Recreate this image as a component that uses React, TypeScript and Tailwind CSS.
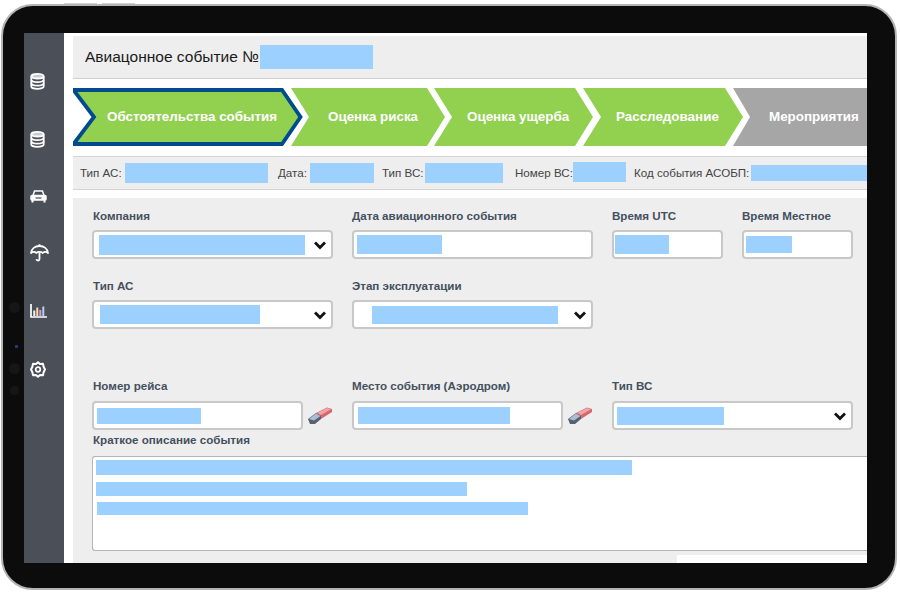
const Blue = ({ w, h, className = '' }: { w: string; h: string; className?: string }) => (
  <div className={`bg-[#9cd0ff] shrink-0 ${w} ${h} ${className}`}></div>
)

function Chevron() {
  return (
    <svg width="14" height="10" viewBox="0 0 14 10" className="shrink-0">
      <path d="M2 2.5 L7 7.5 L12 2.5" fill="none" stroke="#111" strokeWidth="2.8" />
    </svg>
  )
}

function Eraser() {
  return (
    <svg width="26" height="18" viewBox="0 0 26 18" className="shrink-0">
      <path d="M9 6 L20 .5 L25 2 L25 5 L14 12 Z" fill="#d9666f" />
      <path d="M10 6 L20 1 L24 2.2 L14 8 Z" fill="#eea5aa" />
      <path d="M1 12 L9 6 L14 9 L14 12 L8 17 L3 17 Z" fill="#59606e" />
      <path d="M2 12 L9 6.5 L13.5 9 L7 13.5 Z" fill="#a9bdd6" />
    </svg>
  )
}

function DbIcon() {
  return (
    <svg width="15" height="17" viewBox="0 0 15 17" fill="none" stroke="#fff" strokeWidth="1.8">
      <ellipse cx="7.5" cy="3.2" rx="6.2" ry="2.3" fill="#c9ccd2" />
      <path d="M1.3 3.2v10.3c0 1.3 2.8 2.4 6.2 2.4s6.2-1.1 6.2-2.4V3.2" />
      <path d="M1.3 6.8c0 1.3 2.8 2.4 6.2 2.4s6.2-1.1 6.2-2.4M1.3 10.3c0 1.3 2.8 2.4 6.2 2.4s6.2-1.1 6.2-2.4" />
    </svg>
  )
}

function CarIcon() {
  return (
    <svg width="17" height="13" viewBox="0 0 17 13" fill="none" stroke="#fff" strokeWidth="1.5">
      <path d="M3 5.5 L4.5 1 H12.5 L14 5.5" />
      <rect x="1" y="5.5" width="15" height="4.5" rx="1" fill="#fff" />
      <path d="M2.5 10v2.5M14.5 10v2.5" strokeWidth="2" />
      <path d="M5.5 8h6" stroke="#6d737d" />
    </svg>
  )
}

function UmbrellaIcon() {
  return (
    <svg width="19" height="18" viewBox="0 0 19 18" fill="none" stroke="#fff" strokeWidth="1.8" strokeLinejoin="round">
      <path d="M1 9 C1.5 4.6 5 2 9.5 2 S17.5 4.6 18 9 C16.5 7.6 14 7.6 12.7 9 C11.5 7.6 7.5 7.6 6.3 9 C5 7.6 2.5 7.6 1 9 Z" />
      <path d="M9.5 .3v2M9.5 8.5v6.5c0 2-2.8 2-3.1 .2" />
    </svg>
  )
}

function ChartIcon() {
  return (
    <svg width="17" height="14" viewBox="0 0 17 14" fill="none">
      <path d="M1 0v13h16" stroke="#fff" strokeWidth="1.7" />
      <path d="M4.3 12V6.5" stroke="#f4f4f4" strokeWidth="2" />
      <path d="M7.3 12V3.5" stroke="#f3dcae" strokeWidth="2" />
      <path d="M10.3 12V6" stroke="#e59ac4" strokeWidth="2" />
      <path d="M13.3 12V2.5" stroke="#b3d0f5" strokeWidth="2" />
    </svg>
  )
}

function GearIcon() {
  return (
    <svg width="16" height="17" viewBox="0 0 16 17" fill="none" stroke="#fff" strokeWidth="2">
      <path d="M8 1.2 L10 3 L13 2.8 L13.6 5.7 L15 8.5 L13.6 11.3 L13 14.2 L10 14 L8 15.8 L6 14 L3 14.2 L2.4 11.3 L1 8.5 L2.4 5.7 L3 2.8 L6 3 Z" strokeLinejoin="round" />
      <circle cx="8" cy="8.5" r="2.3" strokeWidth="1.7" />
    </svg>
  )
}

const steps = [
  { text: 'Оценка риска', w: 'w-[154px]', ml: 'ml-[-12px]', pl: 'pl-[37px]', pts: '0,0 136,0 154,29 136,58 0,58 18,29', fill: '#92d050' },
  { text: 'Оценка ущерба', w: 'w-[159px]', ml: 'ml-[-11px]', pl: 'pl-[33px]', pts: '0,0 141,0 159,29 141,58 0,58 18,29', fill: '#92d050' },
  { text: 'Расследование', w: 'w-[160px]', ml: 'ml-[-10px]', pl: 'pl-[33px]', pts: '0,0 142,0 160,29 142,58 0,58 18,29', fill: '#92d050' },
  { text: 'Мероприятия', w: 'w-[134px]', ml: 'ml-[-10px]', pl: 'pl-[36px]', pts: '0,0 134,0 134,58 0,58 17,29', fill: '#a6a6a6' },
]

const label = 'text-[11.6px] leading-[14px] font-bold text-[#44505e]'
const box = 'h-[29px] bg-white border-2 border-[#c8c8c8] rounded-[4px] flex items-center'

export default function App() {
  return (
    <div className="w-[900px] h-[592px] bg-white overflow-hidden font-['Liberation_Sans',sans-serif]">
      <div className="relative ml-px mt-[4px] w-[896px] h-[586px] bg-[#0c0c0c] border-2 border-[#b4b4b4] rounded-[32px] pl-[21px] pr-[27px] pt-[27px] pb-[24px]">
        {/* hardware buttons and camera dots on the bezel */}
        <div className="absolute top-[-3px] left-[61px] w-[33px] h-px bg-[#d0d0d0]"></div>
        <div className="absolute top-[-3px] left-[99px] w-[33px] h-px bg-[#d0d0d0]"></div>
        <div className="absolute top-[296px] left-[6px] w-[11px] h-[11px] rounded-full bg-[#161616]"></div>
        <div className="absolute top-[339px] left-[12px] w-[3px] h-[3px] bg-[#1f3a7a]"></div>
        <div className="absolute top-[357px] left-[6px] w-[11px] h-[11px] rounded-full bg-[#161616]"></div>
        <div className="absolute top-[380px] left-[7px] w-[9px] h-[9px] rounded-full bg-[#161616]"></div>

        <div className="w-[843px] h-[530px] flex bg-white overflow-hidden">
          {/* Sidebar */}
          <div className="w-10 shrink-0 bg-[#4a4f58] flex flex-col items-start pl-[6px] pt-[40px]">
            <div className="h-[58px] shrink-0"><DbIcon /></div>
            <div className="h-[59px] shrink-0"><DbIcon /></div>
            <div className="h-[54px] shrink-0"><CarIcon /></div>
            <div className="h-[60px] shrink-0"><UmbrellaIcon /></div>
            <div className="h-[57px] shrink-0"><ChartIcon /></div>
            <GearIcon />
          </div>

          <div className="flex-1 min-w-0 pl-[9px] pt-[3px] flex flex-col">
            {/* Title */}
            <div className="h-[43px] shrink-0 bg-[#eeeeee] border-b border-[#cfcfcf] flex items-center pl-[12px]">
              <span className="text-[15.5px] text-[#1a1a1a]">Авиацонное событие №</span>
              <Blue w="w-[113px]" h="h-[24px]" className="ml-[1px]" />
            </div>

            {/* Steps */}
            <div className="mt-[9px] h-[58px] shrink-0 flex">
              <div className="relative w-[230px] h-[58px] shrink-0 flex items-center pl-[34px]">
                <svg width="230" height="58" viewBox="0 0 230 58" className="absolute inset-0">
                  <polygon points="0.5,2 209,2 227.5,29 209,56 0.5,56 21,29" fill="#92d050" stroke="#004a8f" strokeWidth="3.8" />
                </svg>
                <span className="relative text-[13.4px] font-bold text-white">Обстоятельства события</span>
              </div>
              {steps.map((s, i) => (
                <div key={i} className={`relative ${s.w} ${s.ml} ${s.pl} h-[58px] shrink-0 flex items-center`}>
                  <svg width="100%" height="58" className="absolute inset-0">
                    <polygon points={s.pts} fill={s.fill} />
                  </svg>
                  <span className="relative text-[13.4px] font-bold text-white whitespace-nowrap">{s.text}</span>
                </div>
              ))}
            </div>

            {/* Summary row */}
            <div className="mt-[10px] h-[34px] shrink-0 bg-[#eeeeee] border-y border-[#d4d4d4] flex items-center pl-[7px] text-[11.6px] text-[#444] whitespace-nowrap">
              <span className="w-[45px]">Тип АС:</span>
              <Blue w="w-[143px]" h="h-[20px]" />
              <span className="ml-[10px] w-[32px]">Дата:</span>
              <Blue w="w-[64px]" h="h-[20px]" />
              <span className="ml-[8px] w-[43px]">Тип ВС:</span>
              <Blue w="w-[78px]" h="h-[20px]" />
              <span className="ml-[12px] w-[58px]">Номер ВС:</span>
              <Blue w="w-[53px]" h="h-[20px]" className="mb-[2px]" />
              <span className="ml-[8px] w-[117px]">Код события АСОБП:</span>
              <Blue w="w-[116px]" h="h-[16px]" />
            </div>

            {/* Form */}
            <div className="mt-[8px] flex-1 min-h-0 bg-[#eeeeee] pl-[19px] pt-[11px] relative">
              <div className="grid grid-cols-[241px_241px_111px_111px] gap-x-[19px] w-[761px]">
                <div>
                  <div className={`${label} pl-px`}>Компания</div>
                  <div className={`${box} mt-[7px] pl-[5px] pr-[4px] justify-between`}>
                    <Blue w="w-[206px]" h="h-[20px]" />
                    <Chevron />
                  </div>
                </div>
                <div>
                  <div className={label}>Дата авиационного события</div>
                  <div className={`${box} mt-[7px] pl-[3px]`}>
                    <Blue w="w-[85px]" h="h-[19px]" />
                  </div>
                </div>
                <div>
                  <div className={label}>Время UTC</div>
                  <div className={`${box} mt-[7px] pl-[1px]`}>
                    <Blue w="w-[54px]" h="h-[19px]" />
                  </div>
                </div>
                <div>
                  <div className={label}>Время Местное</div>
                  <div className={`${box} mt-[7px] pl-[2px]`}>
                    <Blue w="w-[46px]" h="h-[17px]" />
                  </div>
                </div>
              </div>

              <div className="mt-[20px] grid grid-cols-[241px_241px] gap-x-[19px]">
                <div>
                  <div className={`${label} pl-px`}>Тип АС</div>
                  <div className={`${box} mt-[7px] pl-[6px] pr-[4px] justify-between`}>
                    <Blue w="w-[160px]" h="h-[19px]" />
                    <Chevron />
                  </div>
                </div>
                <div>
                  <div className={label}>Этап эксплуатации</div>
                  <div className={`${box} mt-[7px] pl-[18px] pr-[4px] justify-between`}>
                    <Blue w="w-[186px]" h="h-[18px]" />
                    <Chevron />
                  </div>
                </div>
              </div>

              <div className="mt-[50px] grid grid-cols-[241px_241px_241px] gap-x-[19px] w-[761px]">
                <div>
                  <div className={`${label} pl-px`}>Номер рейса</div>
                  <div className="mt-[8px] flex items-center gap-[4px]">
                    <div className={`${box} w-[212px] pl-[3px]`}>
                      <Blue w="w-[104px]" h="h-[16px]" />
                    </div>
                    <Eraser />
                  </div>
                </div>
                <div>
                  <div className={label}>Место события (Аэродром)</div>
                  <div className="mt-[8px] flex items-center gap-[4px]">
                    <div className={`${box} w-[212px] pl-[4px]`}>
                      <Blue w="w-[152px]" h="h-[17px]" />
                    </div>
                    <Eraser />
                  </div>
                </div>
                <div>
                  <div className={label}>Тип ВС</div>
                  <div className={`${box} mt-[8px] pl-[3px] pr-[4px] justify-between`}>
                    <Blue w="w-[107px]" h="h-[18px]" />
                    <Chevron />
                  </div>
                </div>
              </div>

              <div className={`${label} pl-px mt-[3px]`}>Краткое описание события</div>
              <div className="mt-[9px] h-[95px] bg-white border border-r-0 border-[#b5b5b5] rounded-l-[3px] pl-[3px] pt-[3px] flex flex-col">
                <Blue w="w-[536px]" h="h-[15px]" />
                <Blue w="w-[371px]" h="h-[14px]" className="mt-[7px]" />
                <Blue w="w-[431px]" h="h-[13px]" className="mt-[6px] ml-[1px]" />
              </div>

              {/* white strip at the screen's bottom edge */}
              <div className="absolute right-0 bottom-0 w-[190px] h-[8px] bg-white"></div>
            </div>
          </div>
        </div>
      </div>
    </div>
  )
}
